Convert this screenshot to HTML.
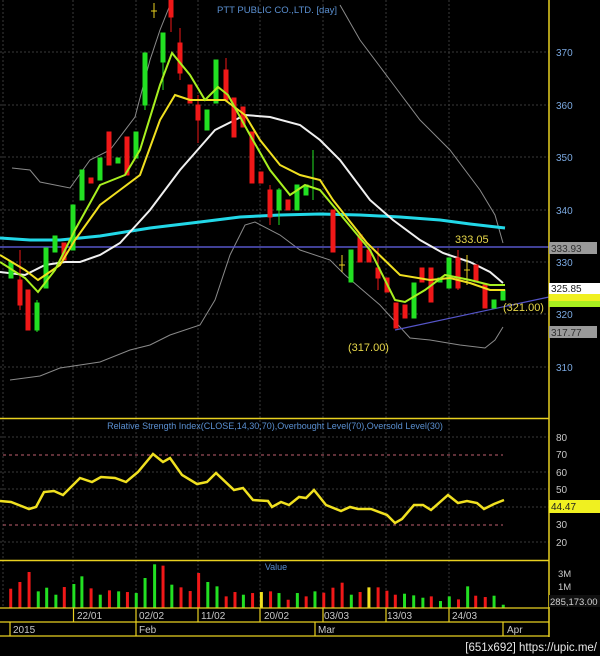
<!DOCTYPE html>
<html><head><meta charset="utf-8"><style>
html,body{margin:0;padding:0;background:#000;width:600px;height:656px;overflow:hidden}
svg{display:block}
text{font-family:"Liberation Sans",sans-serif}
</style></head><body>
<svg width="600" height="656" viewBox="0 0 600 656" xmlns="http://www.w3.org/2000/svg">
<rect width="600" height="656" fill="#000"/>
<g stroke="#3a3a3a" stroke-width="1" stroke-dasharray="2,2">
<line x1="0" y1="52" x2="549" y2="52"/><line x1="0" y1="105" x2="549" y2="105"/><line x1="0" y1="157" x2="549" y2="157"/><line x1="0" y1="210" x2="549" y2="210"/><line x1="0" y1="262" x2="549" y2="262"/><line x1="0" y1="314" x2="549" y2="314"/><line x1="0" y1="367" x2="549" y2="367"/>
<line x1="3" y1="0" x2="3" y2="608"/><line x1="73" y1="0" x2="73" y2="608"/><line x1="136" y1="0" x2="136" y2="608"/><line x1="198" y1="0" x2="198" y2="608"/><line x1="260" y1="0" x2="260" y2="608"/><line x1="323" y1="0" x2="323" y2="608"/><line x1="386" y1="0" x2="386" y2="608"/><line x1="449" y1="0" x2="449" y2="608"/>
<line x1="0" y1="437" x2="549" y2="437"/><line x1="0" y1="472" x2="549" y2="472"/><line x1="0" y1="489" x2="549" y2="489"/><line x1="0" y1="507" x2="549" y2="507"/><line x1="0" y1="542" x2="549" y2="542"/>
</g>
<text x="217" y="13" font-size="9.5" fill="#5a8fd0">PTT PUBLIC CO.,LTD. [day]</text>
<g fill="none" stroke="#8a8a8a" stroke-width="1">
<polyline points="12,168 30,170 40,182 70,188 90,160 110,150 135,117 150,60 160,30 172,0"/>
<polyline points="340,5 360,40 390,80 420,120 450,150 480,190 495,215 503,243"/>
<polyline points="10,380 40,376 60,368 100,362 130,350 150,345 170,335 200,325 215,300 230,255 245,225 255,222 280,235 300,250 330,260 345,275 380,305 410,338 430,340 460,345 485,348 495,340 503,327"/>
</g>
<polyline fill="none" stroke="#22d8e8" stroke-width="3" points="0,238 30,240 60,240 100,236 150,228 200,222 240,217 280,215 320,214 360,215 400,217 440,220 470,224 505,228"/>
<line x1="0" y1="247" x2="549" y2="247" stroke="#5555c8" stroke-width="1.5"/>
<line x1="395" y1="330" x2="549" y2="297" stroke="#5555c8" stroke-width="1.2"/>
<polyline fill="none" stroke="#f0f0f0" stroke-width="2" points="0,272 25,275 45,265 65,262 80,262 100,255 120,243 150,210 180,170 215,130 245,115 270,117 300,125 320,140 340,160 370,200 393,220 420,240 443,253 470,262 490,272 503,283"/>
<g stroke-width="1">
<g fill="#22e022" stroke="#22e022">
<rect x="9" y="262" width="4" height="16"/><rect x="35" y="303" width="4" height="27"/><line x1="37" y1="300" x2="37" y2="332"/><rect x="44" y="248" width="4" height="40"/><rect x="53" y="236" width="4" height="16"/><rect x="71" y="205" width="4" height="45"/><rect x="80" y="170" width="4" height="30"/><rect x="98" y="158" width="4" height="22"/><rect x="116" y="158" width="4" height="5"/><rect x="134" y="132" width="4" height="26"/><rect x="143" y="53" width="4" height="52"/><line x1="145" y1="53" x2="145" y2="110"/><rect x="161" y="33" width="4" height="29"/><line x1="163" y1="33" x2="163" y2="90"/><rect x="205" y="110" width="4" height="20"/><rect x="214" y="60" width="4" height="43"/><rect x="277" y="190" width="4" height="20"/><line x1="279" y1="188" x2="279" y2="225"/><rect x="295" y="185" width="4" height="25"/><rect x="304" y="185" width="4" height="10"/><line x1="313" y1="150" x2="313" y2="200"/><rect x="349" y="250" width="4" height="32"/><rect x="412" y="283" width="4" height="35"/><rect x="438" y="278" width="4" height="4"/><rect x="447" y="258" width="4" height="30"/><rect x="492" y="300" width="4" height="8"/><rect x="501" y="290" width="4" height="10"/>
</g>
<g fill="#f01818" stroke="#f01818">
<rect x="18" y="280" width="4" height="25"/><line x1="20" y1="250" x2="20" y2="310"/><rect x="26" y="290" width="4" height="40"/><rect x="62" y="243" width="4" height="17"/><rect x="89" y="178" width="4" height="5"/><rect x="107" y="132" width="4" height="33"/><rect x="125" y="137" width="4" height="38"/><rect x="169" y="0" width="4" height="17"/><line x1="171" y1="0" x2="171" y2="32"/><rect x="178" y="43" width="4" height="30"/><line x1="180" y1="28" x2="180" y2="80"/><rect x="188" y="85" width="4" height="18"/><rect x="196" y="105" width="4" height="15"/><line x1="198" y1="95" x2="198" y2="143"/><rect x="224" y="70" width="4" height="30"/><line x1="226" y1="58" x2="226" y2="100"/><rect x="232" y="98" width="4" height="39"/><rect x="241" y="107" width="4" height="20"/><rect x="250" y="132" width="4" height="51"/><rect x="259" y="172" width="4" height="11"/><rect x="268" y="190" width="4" height="27"/><line x1="270" y1="185" x2="270" y2="225"/><rect x="286" y="200" width="4" height="10"/><rect x="331" y="210" width="4" height="42"/><rect x="358" y="235" width="4" height="27"/><rect x="367" y="250" width="4" height="12"/><rect x="376" y="268" width="4" height="10"/><line x1="378" y1="248" x2="378" y2="290"/><rect x="385" y="278" width="4" height="14"/><rect x="394" y="303" width="4" height="25"/><rect x="403" y="305" width="4" height="13"/><rect x="420" y="268" width="4" height="14"/><rect x="429" y="268" width="4" height="34"/><rect x="456" y="258" width="4" height="30"/><line x1="458" y1="250" x2="458" y2="290"/><rect x="474" y="265" width="4" height="17"/><rect x="483" y="285" width="4" height="23"/>
</g>
<g stroke="#e8d020"><line x1="154" y1="3" x2="154" y2="18"/><line x1="151" y1="11" x2="157" y2="11"/><line x1="342" y1="255" x2="342" y2="272"/><line x1="339" y1="265" x2="345" y2="265"/><line x1="467" y1="255" x2="467" y2="285"/><line x1="464" y1="270" x2="470" y2="270"/></g>
</g>
<polyline fill="none" stroke="#f0e020" stroke-width="2" points="0,255 25,270 38,280 60,265 75,240 100,205 120,190 140,175 160,120 175,95 190,100 205,100 225,100 245,115 260,140 280,165 300,175 320,180 333,200 367,243 400,275 430,280 450,278 470,283 490,290 505,290"/>
<polyline fill="none" stroke="#a8f020" stroke-width="2" points="0,262 25,278 38,292 55,270 75,230 100,185 125,175 140,150 160,85 172,53 190,75 205,100 218,87 228,95 250,135 270,170 290,195 305,185 320,190 345,220 370,250 395,300 405,302 425,290 445,275 470,280 490,285 505,285"/>
<text x="455" y="243" font-size="11" fill="#e8d84a">333.05</text>
<text x="348" y="351" font-size="11" fill="#e8d84a">(317.00)</text>
<text x="503" y="311" font-size="11" fill="#e8d84a">(321.00)</text>
<line x1="549" y1="0" x2="549" y2="637" stroke="#e8d020" stroke-width="1.5"/>
<g font-size="10" fill="#7aa8e0">
<text x="556" y="56">370</text><text x="556" y="109">360</text><text x="556" y="161">350</text><text x="556" y="214">340</text><text x="556" y="266">330</text><text x="556" y="318">320</text><text x="556" y="371">310</text>
</g>
<rect x="549" y="242" width="48" height="12" fill="#9a9a9a"/><text x="551" y="252" font-size="10" fill="#303030">333.93</text>
<rect x="549" y="283" width="51" height="11" fill="#fff"/><text x="551" y="292" font-size="10" fill="#202020">325.85</text>
<rect x="549" y="294" width="51" height="7" fill="#f0f020"/><rect x="549" y="301" width="51" height="6" fill="#a8f020"/>
<rect x="549" y="326" width="48" height="12" fill="#9a9a9a"/><text x="551" y="336" font-size="10" fill="#303030">317.77</text>
<line x1="0" y1="418.5" x2="549" y2="418.5" stroke="#e8d020" stroke-width="1.5"/>
<text x="275" y="429" font-size="9" fill="#5a8fd0" text-anchor="middle">Relative Strength Index(CLOSE,14,30,70),Overbought Level(70),Oversold Level(30)</text>
<g stroke="#c06070" stroke-dasharray="3,3"><line x1="3" y1="455" x2="503" y2="455"/><line x1="3" y1="525" x2="503" y2="525"/></g>
<polyline fill="none" stroke="#f0e020" stroke-width="2.5" points="0,501 11,502 29,509 36,507 44,492 54,491 63,495 80,478 92,482 101,477 115,478 126,482 138,472 153,454 163,462 170,458 182,475 197,484 207,482 216,473 234,490 243,488 253,500 268,501 272,507 281,502 289,505 299,497 306,498 314,490 326,505 341,511 350,507 358,509 371,509 387,515 395,523 402,519 414,505 423,505 431,510 448,495 458,503 467,501 477,503 484,509 494,504 504,500"/>
<g font-size="10" fill="#c8c8c8">
<text x="556" y="441">80</text><text x="556" y="458">70</text><text x="556" y="476">60</text><text x="556" y="493">50</text><text x="556" y="528">30</text><text x="556" y="546">20</text>
</g>
<rect x="549" y="500" width="51" height="13" fill="#f0f020"/><text x="551" y="510" font-size="10" fill="#202020">44.47</text>
<line x1="0" y1="560.5" x2="549" y2="560.5" stroke="#e8d020" stroke-width="1.5"/>
<text x="276" y="570" font-size="9" fill="#5a8fd0" text-anchor="middle">Value</text>
<g transform="translate(0,410) scale(0.3827,0.334)" stroke-width="3">
<g stroke="#f01818">
<line x1="28" y1="535" x2="28" y2="593" vector-effect="non-scaling-stroke"/><line x1="52" y1="515" x2="52" y2="593" vector-effect="non-scaling-stroke"/><line x1="76" y1="485" x2="76" y2="593" vector-effect="non-scaling-stroke"/><line x1="168" y1="530" x2="168" y2="593" vector-effect="non-scaling-stroke"/><line x1="238" y1="534" x2="238" y2="593" vector-effect="non-scaling-stroke"/><line x1="286" y1="540" x2="286" y2="593" vector-effect="non-scaling-stroke"/><line x1="333" y1="545" x2="333" y2="593" vector-effect="non-scaling-stroke"/><line x1="426" y1="466" x2="426" y2="593" vector-effect="non-scaling-stroke"/><line x1="473" y1="531" x2="473" y2="593" vector-effect="non-scaling-stroke"/><line x1="497" y1="542" x2="497" y2="593" vector-effect="non-scaling-stroke"/><line x1="519" y1="488" x2="519" y2="593" vector-effect="non-scaling-stroke"/><line x1="591" y1="558" x2="591" y2="593" vector-effect="non-scaling-stroke"/><line x1="614" y1="545" x2="614" y2="593" vector-effect="non-scaling-stroke"/><line x1="660" y1="548" x2="660" y2="593" vector-effect="non-scaling-stroke"/><line x1="707" y1="543" x2="707" y2="593" vector-effect="non-scaling-stroke"/><line x1="753" y1="568" x2="753" y2="593" vector-effect="non-scaling-stroke"/><line x1="800" y1="558" x2="800" y2="593" vector-effect="non-scaling-stroke"/><line x1="846" y1="547" x2="846" y2="593" vector-effect="non-scaling-stroke"/><line x1="870" y1="532" x2="870" y2="593" vector-effect="non-scaling-stroke"/><line x1="894" y1="517" x2="894" y2="593" vector-effect="non-scaling-stroke"/><line x1="941" y1="545" x2="941" y2="593" vector-effect="non-scaling-stroke"/><line x1="988" y1="531" x2="988" y2="593" vector-effect="non-scaling-stroke"/><line x1="1011" y1="541" x2="1011" y2="593" vector-effect="non-scaling-stroke"/><line x1="1033" y1="553" x2="1033" y2="593" vector-effect="non-scaling-stroke"/><line x1="1127" y1="558" x2="1127" y2="593" vector-effect="non-scaling-stroke"/><line x1="1198" y1="567" x2="1198" y2="593" vector-effect="non-scaling-stroke"/><line x1="1243" y1="556" x2="1243" y2="593" vector-effect="non-scaling-stroke"/><line x1="1268" y1="560" x2="1268" y2="593" vector-effect="non-scaling-stroke"/>
</g>
<g stroke="#22e022">
<line x1="100" y1="543" x2="100" y2="593" vector-effect="non-scaling-stroke"/><line x1="122" y1="532" x2="122" y2="593" vector-effect="non-scaling-stroke"/><line x1="146" y1="553" x2="146" y2="593" vector-effect="non-scaling-stroke"/><line x1="193" y1="521" x2="193" y2="593" vector-effect="non-scaling-stroke"/><line x1="214" y1="498" x2="214" y2="593" vector-effect="non-scaling-stroke"/><line x1="262" y1="553" x2="262" y2="593" vector-effect="non-scaling-stroke"/><line x1="310" y1="543" x2="310" y2="593" vector-effect="non-scaling-stroke"/><line x1="356" y1="548" x2="356" y2="593" vector-effect="non-scaling-stroke"/><line x1="379" y1="503" x2="379" y2="593" vector-effect="non-scaling-stroke"/><line x1="404" y1="462" x2="404" y2="593" vector-effect="non-scaling-stroke"/><line x1="449" y1="523" x2="449" y2="593" vector-effect="non-scaling-stroke"/><line x1="543" y1="515" x2="543" y2="593" vector-effect="non-scaling-stroke"/><line x1="567" y1="528" x2="567" y2="593" vector-effect="non-scaling-stroke"/><line x1="636" y1="553" x2="636" y2="593" vector-effect="non-scaling-stroke"/><line x1="729" y1="548" x2="729" y2="593" vector-effect="non-scaling-stroke"/><line x1="777" y1="548" x2="777" y2="593" vector-effect="non-scaling-stroke"/><line x1="823" y1="543" x2="823" y2="593" vector-effect="non-scaling-stroke"/><line x1="918" y1="553" x2="918" y2="593" vector-effect="non-scaling-stroke"/><line x1="1057" y1="550" x2="1057" y2="593" vector-effect="non-scaling-stroke"/><line x1="1081" y1="555" x2="1081" y2="593" vector-effect="non-scaling-stroke"/><line x1="1105" y1="562" x2="1105" y2="593" vector-effect="non-scaling-stroke"/><line x1="1151" y1="572" x2="1151" y2="593" vector-effect="non-scaling-stroke"/><line x1="1174" y1="558" x2="1174" y2="593" vector-effect="non-scaling-stroke"/><line x1="1222" y1="528" x2="1222" y2="593" vector-effect="non-scaling-stroke"/><line x1="1291" y1="556" x2="1291" y2="593" vector-effect="non-scaling-stroke"/><line x1="1315" y1="583" x2="1315" y2="593" vector-effect="non-scaling-stroke"/>
</g>
<g stroke="#f0e020"><line x1="683" y1="545" x2="683" y2="593" vector-effect="non-scaling-stroke"/><line x1="964" y1="531" x2="964" y2="593" vector-effect="non-scaling-stroke"/></g>
</g>
<g font-size="9.5" fill="#c8c8c8"><text x="558" y="577">3M</text><text x="558" y="590">1M</text></g>
<rect x="549" y="595" width="51" height="12" fill="#101010"/><text x="550" y="605" font-size="9.5" fill="#d0d0d0">285,173.00</text>
<g stroke="#e8d020" stroke-width="1.2" fill="none">
<line x1="0" y1="608" x2="549" y2="608"/><line x1="0" y1="622" x2="549" y2="622"/><line x1="0" y1="636" x2="549" y2="636"/>
<line x1="73.5" y1="608" x2="73.5" y2="622"/><line x1="136" y1="608" x2="136" y2="622"/><line x1="198" y1="608" x2="198" y2="622"/><line x1="260" y1="608" x2="260" y2="622"/><line x1="323" y1="608" x2="323" y2="622"/><line x1="386" y1="608" x2="386" y2="622"/><line x1="449" y1="608" x2="449" y2="622"/>
<line x1="10" y1="622" x2="10" y2="636"/><line x1="136" y1="622" x2="136" y2="636"/><line x1="315" y1="622" x2="315" y2="636"/><line x1="503" y1="622" x2="503" y2="636"/>
</g>
<g font-size="10" fill="#c8c8c8">
<text x="77" y="619">22/01</text><text x="139" y="619">02/02</text><text x="201" y="619">11/02</text><text x="264" y="619">20/02</text><text x="324" y="619">03/03</text><text x="387" y="619">13/03</text><text x="452" y="619">24/03</text>
<text x="13" y="633">2015</text><text x="139" y="633">Feb</text><text x="318" y="633">Mar</text><text x="507" y="633">Apr</text>
</g>
<text x="597" y="651" font-size="11.5" fill="#e8e8e8" text-anchor="end" font-family="Liberation Mono, monospace">[651x692] https://upic.me/</text>
</svg>
</body></html>
